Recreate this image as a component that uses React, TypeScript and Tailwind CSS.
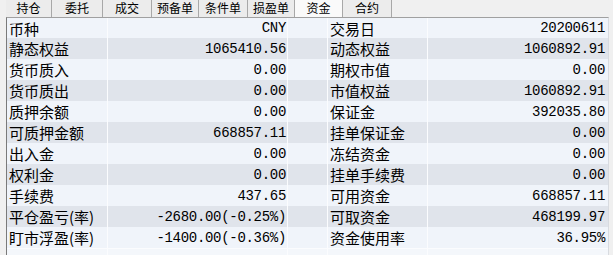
import React from "react";

const tabs: { label: string; w: string; active?: boolean }[] = [
  { label: "持仓", w: "w-[46px]" },
  { label: "委托", w: "w-[51px]" },
  { label: "成交", w: "w-[49px]" },
  { label: "预备单", w: "w-[47px]" },
  { label: "条件单", w: "w-[49px]" },
  { label: "损盈单", w: "w-[47px]" },
  { label: "资金", w: "w-[48px]", active: true },
  { label: "合约", w: "w-[49px]" },
];

const rows: [string, string, string, string][] = [
  ["币种", "CNY", "交易日", "20200611"],
  ["静态权益", "1065410.56", "动态权益", "1060892.91"],
  ["货币质入", "0.00", "期权市值", "0.00"],
  ["货币质出", "0.00", "市值权益", "1060892.91"],
  ["质押余额", "0.00", "保证金", "392035.80"],
  ["可质押金额", "668857.11", "挂单保证金", "0.00"],
  ["出入金", "0.00", "冻结资金", "0.00"],
  ["权利金", "0.00", "挂单手续费", "0.00"],
  ["手续费", "437.65", "可用资金", "668857.11"],
  ["平仓盈亏(率)", "-2680.00(-0.25%)", "可取资金", "468199.97"],
  ["盯市浮盈(率)", "-1400.00(-0.36%)", "资金使用率", "36.95%"],
];

const cjk = { fontFamily: '"Noto Sans CJK SC", "Noto Sans", sans-serif' };
const mono = { fontFamily: '"Liberation Mono", "DejaVu Sans Mono", monospace' };

export default function App() {
  return (
    <div className="w-[613px] h-[255px] overflow-hidden bg-[#f0f0f0] text-black" style={cjk}>
      <div className="flex h-[17px] pl-[6px]">
        {tabs.map((t) => (
          <div
            key={t.label}
            className={`${t.w} h-[17px] flex items-center justify-center text-[12px] leading-none border-r border-[#a8a8a8] ${
              t.active ? "bg-[#fafafa]" : "bg-[#ececec]"
            }`}
          >
            <span className="-mt-[1px]">{t.label}</span>
          </div>
        ))}
      </div>
      <div className="ml-[6px] w-[603px] border-l border-t border-r border-l-[#7a7a7a] border-t-[#a0a0a0] border-r-[#d8dbe0]">
        {rows.map((r, i) => {
          const bg = i % 2 === 0 ? "bg-[#f0f4fa]" : "bg-[#e0e4eb]";
          const h = i === 0 ? "h-[20px]" : "h-[21px]";
          return (
            <div key={i} className={`flex ${h} ${bg}`}>
              <div className="w-[101px] border-r border-[#fbfcfe] flex items-center pl-[2px] text-[15px] leading-none">
                {r[0]}
              </div>
              <div
                className="w-[180px] border-r border-[#fbfcfe] flex items-center justify-end pr-[1px] text-[14px] leading-none tracking-[-0.3px]"
                style={mono}
              >
                {r[1]}
              </div>
              <div className="w-[40px] border-r border-[#fbfcfe]" />
              <div className="w-[100px] border-r border-[#fbfcfe] flex items-center pl-[2px] text-[15px] leading-none">
                {r[2]}
              </div>
              <div
                className="w-[180px] flex items-center justify-end pr-[3px] text-[14px] leading-none tracking-[-0.3px]"
                style={mono}
              >
                {r[3]}
              </div>
            </div>
          );
        })}
        <div className="flex h-[10px] bg-[#f4f7fb] border-t border-[#fbfcfe]">
          <div className="w-[101px] border-r border-[#fbfcfe]" />
          <div className="w-[180px] border-r border-[#fbfcfe]" />
          <div className="w-[40px] border-r border-[#fbfcfe]" />
          <div className="w-[100px] border-r border-[#fbfcfe]" />
          <div className="w-[180px]" />
        </div>
      </div>
    </div>
  );
}
